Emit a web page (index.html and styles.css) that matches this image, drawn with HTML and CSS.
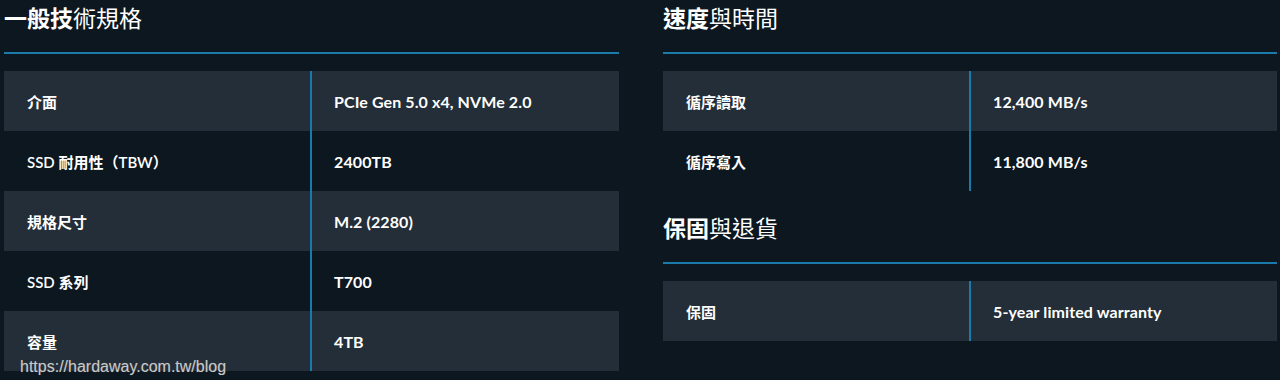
FILE: index.html
```html
<!DOCTYPE html>
<html lang="zh-Hant">
<head>
<meta charset="utf-8">
<title>規格</title>
<link rel="stylesheet" href="styles.css">
</head>
<body>
<div class="page">
  <div class="col">
    <section class="sec">
      <h2 class="sec-title"><b>一般技</b>術規格</h2>
      <div class="spec">
        <div class="row"><div class="k">介面</div><div class="v">PCIe Gen 5.0 x4, NVMe 2.0</div></div>
        <div class="row"><div class="k">SSD 耐用性（TBW）</div><div class="v">2400TB</div></div>
        <div class="row"><div class="k">規格尺寸</div><div class="v">M.2 (2280)</div></div>
        <div class="row"><div class="k">SSD 系列</div><div class="v">T700</div></div>
        <div class="row"><div class="k">容量</div><div class="v">4TB</div></div>
      </div>
    </section>
  </div>
  <div class="col">
    <section class="sec">
      <h2 class="sec-title"><b>速度</b>與時間</h2>
      <div class="spec">
        <div class="row"><div class="k">循序讀取</div><div class="v">12,400 MB/s</div></div>
        <div class="row"><div class="k">循序寫入</div><div class="v">11,800 MB/s</div></div>
      </div>
    </section>
    <section class="sec sec-next">
      <h2 class="sec-title"><b>保固</b>與退貨</h2>
      <div class="spec">
        <div class="row"><div class="k">保固</div><div class="v">5-year limited warranty</div></div>
      </div>
    </section>
  </div>
</div>
<div class="watermark">https://hardaway.com.tw/blog</div>
</body>
</html>
```
FILE: styles.css
```css
html, body {
  margin: 0;
  padding: 0;
  background: #0c1720;
  height: 380px;
  overflow: hidden;
}
body {
  position: relative;
  color: #ffffff;
  font-family: Lato, "Noto Sans CJK TC", sans-serif;
}
.page {
  display: grid;
  grid-template-columns: 615px 614px;
  column-gap: 44px;
  padding-left: 4px;
}
.sec-title {
  margin: 0;
  box-sizing: border-box;
  height: 54px;
  line-height: 34px;
  font-size: 23px;
  font-weight: 400;
  font-family: "Noto Sans CJK TC", sans-serif;
  border-bottom: 2px solid #1a7aa9;
}
.sec-title b {
  font-weight: 700;
}
.spec {
  margin-top: 17px;
}
.sec-next {
  margin-top: 19px;
}
.row {
  display: grid;
  grid-template-columns: 308px 1fr;
  height: 60px;
}
.row:nth-child(odd) {
  background: #232e38;
}
.k, .v {
  display: flex;
  align-items: center;
}
.k {
  padding-left: 23px;
  border-right: 2px solid #1a7aa9;
  font-family: Lato, "Noto Sans CJK TC", sans-serif;
  font-size: 15px;
  font-weight: 600;
}
.v {
  padding-left: 22px;
  font-size: 16px;
  font-weight: 700;
  letter-spacing: 0.1px;
}
.watermark {
  position: absolute;
  left: 20px;
  top: 358px;
  font-family: "Liberation Sans", Arial, sans-serif;
  font-size: 16px;
  color: #c9c9c9;
  text-shadow: 0 0 1px #555;
}
```
